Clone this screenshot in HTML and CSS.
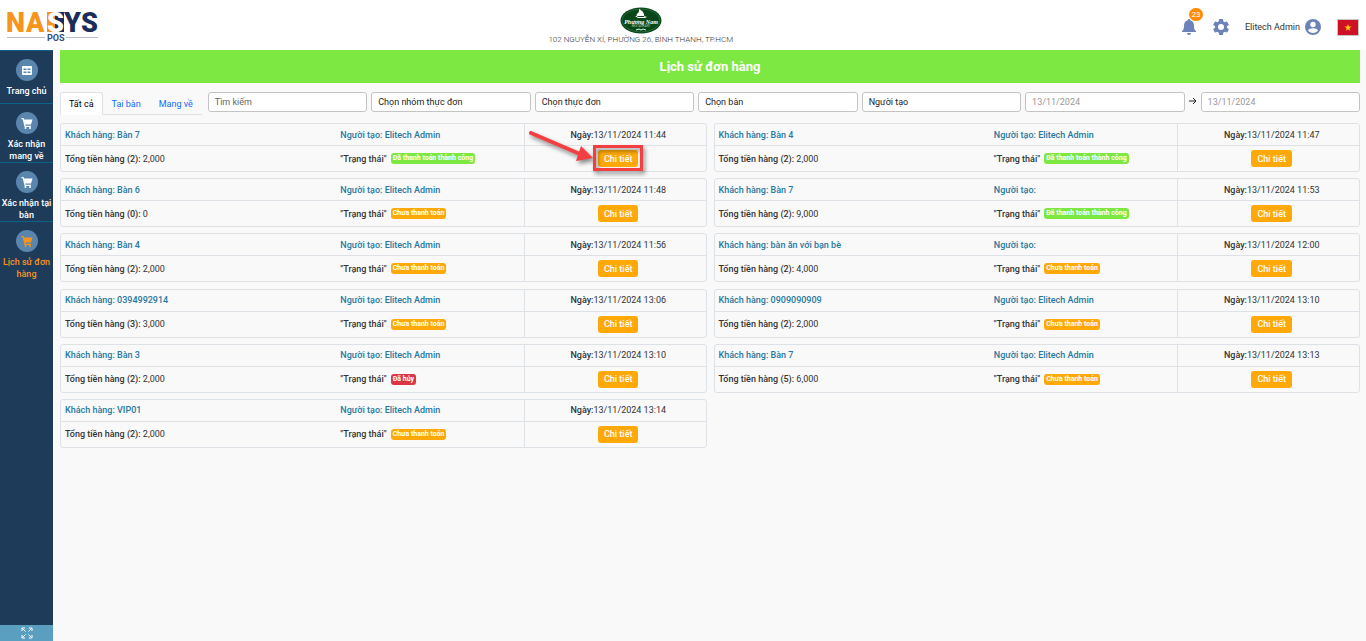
FILE: index.html
```html
<!DOCTYPE html>
<html lang="vi">
<head>
<meta charset="utf-8">
<title>Lịch sử đơn hàng</title>
<meta name="viewport" content="width=device-width, initial-scale=1">
<link rel="stylesheet" href="styles.css">
</head>
<body>
<svg class="defs" aria-hidden="true">
  <symbol id="cart" viewBox="0 0 24 24"><path d="M1 2h4l1 3h17l-3 10H8.500l.7 2.500H20V20H7.200L3.400 4.500H1z"/><circle cx="9" cy="22" r="2"/><circle cx="18" cy="22" r="2"/></symbol>
</svg>
<header class="header">
  <a class="brand" href="#" aria-label="NASYS POS">
    <svg width="96" height="44" viewBox="0 0 96 44">
      <rect x="41" y="9" width="8" height="20" fill="#f7941d"/>
      <rect x="49" y="9" width="9" height="20" fill="#1b2d5b"/>
      <g class="brand-letters">
        <text x="0" y="29" fill="#f7941d">N</text>
        <text x="20" y="29" fill="#f7941d">A</text>
        <text x="41" y="29" fill="#fff">S</text>
        <text x="58" y="29" fill="#1b2d5b">Y</text>
        <text x="75" y="29" fill="#1b2d5b">S</text>
      </g>
      <path d="M1 34.500H39M60 34.500H92" stroke="#b9bccb"/>
      <text class="brand-pos" x="41" y="38">POS</text>
    </svg>
  </a>
  <div class="store">
    <svg width="42" height="27" viewBox="0 0 42 27">
      <ellipse cx="21" cy="13.500" rx="20.500" ry="13" fill="#07471a"/>
      <ellipse cx="21" cy="13.500" rx="19" ry="11.500" fill="none" stroke="#3f7a4e" stroke-width=".6"/>
      <path d="M19 2c4 2 6 5 5 8h-6c-2-1-2-3 0-4 1-1 1-2 1-4zM15 9l3 2h7l2-1-3-1z" fill="#fff"/>
      <text class="store-name" x="21" y="17" text-anchor="middle">Phương Nam</text>
      <text class="store-sub" x="21" y="20" text-anchor="middle">RESTAURANT</text>
      <path d="M16 23l3-1 2 1 2-1 3 1" stroke="#dfe" fill="none"/>
    </svg>
    <span class="store-address">102 NGUYỄN XÍ, PHƯỜNG 26, BÌNH THẠNH, TP.HCM</span>
  </div>
  <div class="tools">
    <button class="icon-button bell" aria-label="Thông báo">
      <svg width="16" height="18" viewBox="0 0 16 18"><path d="M8 1c.8 0 1.200.5 1.200 1.300C12 3 13 5 13 8c0 3 .6 4 2 5v1H1v-1c1.400-1 2-2 2-5 0-3 1-5 3.800-5.700C6.800 1.500 7.200 1 8 1zM6 15h4c0 1.300-.8 2-2 2s-2-.7-2-2z"/></svg>
      <span class="count">23</span>
    </button>
    <button class="icon-button gear" aria-label="Cài đặt">
      <svg width="20" height="20" viewBox="0 0 24 24"><path d="M19.140 12.940c.04-.3.060-.61.060-.94s-.02-.64-.07-.94l2.030-1.580a.49.49 0 0 0 .12-.61l-1.920-3.320a.49.49 0 0 0-.59-.22l-2.390.96a7 7 0 0 0-1.620-.94l-.36-2.540a.48.48 0 0 0-.48-.41h-3.840a.48.48 0 0 0-.47.410l-.36 2.540a7.400 7.400 0 0 0-1.620.94l-2.390-.96a.48.48 0 0 0-.59.220L2.740 8.870a.48.48 0 0 0 .12.610l2.030 1.580a6 6 0 0 0 0 1.880l-2.030 1.580a.49.49 0 0 0-.12.610l1.920 3.320c.12.220.37.290.59.220l2.390-.96c.5.380 1.030.7 1.620.94l.36 2.540c.05.240.24.410.48.410h3.840c.24 0 .44-.17.47-.41l.36-2.540a7.400 7.400 0 0 0 1.620-.94l2.390.96c.22.080.47 0 .59-.22l1.920-3.320a.48.48 0 0 0-.12-.61zM12 15.600a3.600 3.600 0 1 1 0-7.200 3.600 3.600 0 0 1 0 7.200z"/></svg>
    </button>
    <button class="user"><span>Elitech Admin</span>
      <svg width="16" height="16" viewBox="0 0 16 16"><circle cx="8" cy="8" r="8"/><circle cx="8" cy="5.500" r="2.700" fill="#fff"/><path d="M3 11.500c1-3 9-3 10 0-2 3.300-8 3.300-10 0z" fill="#fff"/></svg>
    </button>
    <button class="flag" aria-label="Tiếng Việt">
      <svg width="22" height="17" viewBox="0 0 22 17"><rect x=".5" y=".5" width="21" height="16" fill="#cf1126" stroke="#c9c4c4"/><path d="M11 5l.9 2.600h2.700l-2.200 1.600.8 2.600L11 10.200l-2.200 1.600.8-2.600-2.200-1.600h2.700z" fill="#fc0"/></svg>
    </button>
  </div>
</header>
<div class="layout">
  <nav class="sidebar">
    <a class="nav-item" href="#"><span class="nav-icon"><svg width="10" height="9" viewBox="0 0 10 9"><path fill-rule="evenodd" d="M1 0h8q1 0 1 1v7q0 1-1 1H1q-1 0-1-1V1q0-1 1-1zM1.500 2.500v1.500h3V2.500zM5.500 2.500v1.500h3V2.500zM1.500 5.500V7h3V5.500zM5.500 5.500V7h3V5.500z"/></svg></span>Trang chủ</a>
    <a class="nav-item" href="#"><span class="nav-icon"><svg width="12" height="12"><use href="#cart"/></svg></span>Xác nhận mang về</a>
    <a class="nav-item" href="#"><span class="nav-icon"><svg width="12" height="12"><use href="#cart"/></svg></span>Xác nhận tại bàn</a>
    <a class="nav-item active" href="#"><span class="nav-icon"><svg width="12" height="12"><use href="#cart"/></svg></span>Lịch sử đơn hàng</a>
    <button class="expand" aria-label="Toàn màn hình"><svg width="12" height="12" viewBox="0 0 12 12"><path d="M1 4V1h3M1 1l3.500 3.500M8 1h3v3M11 1L7.500 4.500M1 8v3h3M1 11l3.500-3.500M11 8v3H8M11 11L7.500 7.500"/></svg></button>
  </nav>
  <main class="main">
    <h1 class="title">Lịch sử đơn hàng</h1>
    <form class="filters">
      <div class="tabs">
        <button type="button" class="tab selected">Tất cả</button>
        <button type="button" class="tab">Tại bàn</button>
        <button type="button" class="tab">Mang về</button>
      </div>
      <div class="fields">
        <input class="field" type="text" placeholder="Tìm kiếm" aria-label="Tìm kiếm">
        <select class="field" aria-label="Nhóm thực đơn"><option>Chọn nhóm thực đơn</option></select>
        <select class="field" aria-label="Thực đơn"><option>Chọn thực đơn</option></select>
        <select class="field" aria-label="Bàn"><option>Chọn bàn</option></select>
        <select class="field" aria-label="Người tạo"><option>Người tạo</option></select>
        <input class="field date" type="text" value="13/11/2024" aria-label="Từ ngày">
        <svg class="to" width="8" height="8" viewBox="0 0 8 8"><path d="M0 4h7M4 1l3 3-3 3"/></svg>
        <input class="field date" type="text" value="13/11/2024" aria-label="Đến ngày">
      </div>
    </form>
    <section class="orders">
      <article class="order">
        <div class="cell customer">Khách hàng: Bàn 7</div><div class="cell creator">Người tạo: Elitech Admin</div><div class="cell day"><b>Ngày:</b>13/11/2024 11:44</div>
        <div class="cell"><b>Tổng tiền hàng (2):</b>&nbsp;2,000</div><div class="cell"><b>"Trạng thái"</b><span class="badge paid">Đã thanh toán thành công</span></div>
        <div class="cell action"><span class="spot"><button class="detail">Chi tiết</button><svg class="pointer" width="120" height="56" viewBox="0 0 120 56"><path d="M7 6L56 27" stroke="#f33f41" stroke-width="4" stroke-linecap="round"/><path d="M57 19L69 31L52 34z" fill="#f33f41"/><rect x="70.500" y="19.500" width="47" height="23" fill="none" stroke="#f33f41" stroke-width="3"/></svg></span></div>
      </article>
      <article class="order">
        <div class="cell customer">Khách hàng: Bàn 4</div><div class="cell creator">Người tạo: Elitech Admin</div><div class="cell day"><b>Ngày:</b>13/11/2024 11:47</div>
        <div class="cell"><b>Tổng tiền hàng (2):</b>&nbsp;2,000</div><div class="cell"><b>"Trạng thái"</b><span class="badge paid">Đã thanh toán thành công</span></div>
        <div class="cell action"><button class="detail">Chi tiết</button></div>
      </article>
      <article class="order">
        <div class="cell customer">Khách hàng: Bàn 6</div><div class="cell creator">Người tạo: Elitech Admin</div><div class="cell day"><b>Ngày:</b>13/11/2024 11:48</div>
        <div class="cell"><b>Tổng tiền hàng (0):</b>&nbsp;0</div><div class="cell"><b>"Trạng thái"</b><span class="badge">Chưa thanh toán</span></div>
        <div class="cell action"><button class="detail">Chi tiết</button></div>
      </article>
      <article class="order">
        <div class="cell customer">Khách hàng: Bàn 7</div><div class="cell creator">Người tạo:</div><div class="cell day"><b>Ngày:</b>13/11/2024 11:53</div>
        <div class="cell"><b>Tổng tiền hàng (2):</b>&nbsp;9,000</div><div class="cell"><b>"Trạng thái"</b><span class="badge paid">Đã thanh toán thành công</span></div>
        <div class="cell action"><button class="detail">Chi tiết</button></div>
      </article>
      <article class="order">
        <div class="cell customer">Khách hàng: Bàn 4</div><div class="cell creator">Người tạo: Elitech Admin</div><div class="cell day"><b>Ngày:</b>13/11/2024 11:56</div>
        <div class="cell"><b>Tổng tiền hàng (2):</b>&nbsp;2,000</div><div class="cell"><b>"Trạng thái"</b><span class="badge">Chưa thanh toán</span></div>
        <div class="cell action"><button class="detail">Chi tiết</button></div>
      </article>
      <article class="order">
        <div class="cell customer">Khách hàng: bàn ăn với bạn bè</div><div class="cell creator">Người tạo:</div><div class="cell day"><b>Ngày:</b>13/11/2024 12:00</div>
        <div class="cell"><b>Tổng tiền hàng (2):</b>&nbsp;4,000</div><div class="cell"><b>"Trạng thái"</b><span class="badge">Chưa thanh toán</span></div>
        <div class="cell action"><button class="detail">Chi tiết</button></div>
      </article>
      <article class="order">
        <div class="cell customer">Khách hàng: 0394992914</div><div class="cell creator">Người tạo: Elitech Admin</div><div class="cell day"><b>Ngày:</b>13/11/2024 13:06</div>
        <div class="cell"><b>Tổng tiền hàng (3):</b>&nbsp;3,000</div><div class="cell"><b>"Trạng thái"</b><span class="badge">Chưa thanh toán</span></div>
        <div class="cell action"><button class="detail">Chi tiết</button></div>
      </article>
      <article class="order">
        <div class="cell customer">Khách hàng: 0909090909</div><div class="cell creator">Người tạo: Elitech Admin</div><div class="cell day"><b>Ngày:</b>13/11/2024 13:10</div>
        <div class="cell"><b>Tổng tiền hàng (2):</b>&nbsp;2,000</div><div class="cell"><b>"Trạng thái"</b><span class="badge">Chưa thanh toán</span></div>
        <div class="cell action"><button class="detail">Chi tiết</button></div>
      </article>
      <article class="order">
        <div class="cell customer">Khách hàng: Bàn 3</div><div class="cell creator">Người tạo: Elitech Admin</div><div class="cell day"><b>Ngày:</b>13/11/2024 13:10</div>
        <div class="cell"><b>Tổng tiền hàng (2):</b>&nbsp;2,000</div><div class="cell"><b>"Trạng thái"</b><span class="badge cancelled">Đã hủy</span></div>
        <div class="cell action"><button class="detail">Chi tiết</button></div>
      </article>
      <article class="order">
        <div class="cell customer">Khách hàng: Bàn 7</div><div class="cell creator">Người tạo: Elitech Admin</div><div class="cell day"><b>Ngày:</b>13/11/2024 13:13</div>
        <div class="cell"><b>Tổng tiền hàng (5):</b>&nbsp;6,000</div><div class="cell"><b>"Trạng thái"</b><span class="badge">Chưa thanh toán</span></div>
        <div class="cell action"><button class="detail">Chi tiết</button></div>
      </article>
      <article class="order">
        <div class="cell customer">Khách hàng: VIP01</div><div class="cell creator">Người tạo: Elitech Admin</div><div class="cell day"><b>Ngày:</b>13/11/2024 13:14</div>
        <div class="cell"><b>Tổng tiền hàng (2):</b>&nbsp;2,000</div><div class="cell"><b>"Trạng thái"</b><span class="badge">Chưa thanh toán</span></div>
        <div class="cell action"><button class="detail">Chi tiết</button></div>
      </article>
    </section>
  </main>
</div>
</body>
</html>
```
FILE: styles.css
```css
* { box-sizing: border-box; }
body {
  margin: 0;
  min-height: 100vh;
  display: flex;
  flex-direction: column;
  background: #f9f9f9;
  color: #333;
  font: 9px/12px Roboto, sans-serif;
}
button, input, select { font: inherit; color: inherit; margin: 0; }
button { border: 0; padding: 0; background: none; cursor: pointer; }
a { color: inherit; text-decoration: none; }
svg { display: block; flex: none; }
b { font-weight: 500; }
.defs { position: absolute; width: 0; height: 0; }

.header {
  display: grid;
  grid-template-columns: 13fr auto 15fr;
  height: 50px;
  padding: 0 7px 0 6px;
  background: #fff;
}
.brand { padding-top: 3px; }
.brand-letters { font: 900 27px Roboto, sans-serif; }
.brand-pos { font: 700 9px Roboto, sans-serif; fill: #2c4a8c; }
.store {
  display: flex;
  flex-direction: column;
  align-items: center;
  padding-top: 7px;
}
.store-name { font: italic 700 6px "Liberation Serif", serif; fill: #fff; }
.store-sub { font: 3px Roboto, sans-serif; fill: #b5cfba; }
.store-address { font-size: 8px; font-weight: 300; }
.tools {
  display: flex;
  justify-content: flex-end;
  align-items: center;
  padding-top: 4px;
  fill: #6c83b9;
}
.icon-button { position: relative; }
.bell { margin-right: 14px; }
.gear { margin-right: 14px; }
.count {
  position: absolute;
  top: -10px;
  left: 8px;
  width: 14px;
  height: 13px;
  border-radius: 7px;
  background: #ff8c00;
  color: #fff;
  font-size: 8px;
  line-height: 13px;
}
.user { display: flex; align-items: center; gap: 5px; margin-right: 16px; }

.layout { flex: 1; display: flex; }
.sidebar {
  width: 53px;
  flex: none;
  display: flex;
  flex-direction: column;
  background: #1e3c5a;
  color: #fff;
  fill: #fff;
  font-weight: 500;
  text-align: center;
}
.nav-item {
  display: flex;
  flex-direction: column;
  align-items: center;
  gap: 4px;
  padding-top: 8px;
  border-top: 1px solid #0d6285;
}
.nav-item:first-child { padding-bottom: 6px; }
.nav-icon {
  display: grid;
  place-items: center;
  width: 22px;
  height: 22px;
  border-radius: 50%;
  background: #5a86ae;
}
.active { color: #f7941d; fill: #f7941d; }
.expand {
  display: grid;
  place-items: center;
  height: 16px;
  margin-top: auto;
  background: #5a9fc0;
}
.expand path { fill: none; stroke: #fff; }

.main { flex: 1; min-width: 0; padding: 0 6px 0 7px; }
.title {
  margin: 0;
  background: #7ee842;
  color: #fff;
  text-align: center;
  font-size: 13px;
  font-weight: 700;
  line-height: 33px;
}
.filters { display: flex; gap: 6px; padding-top: 9px; }
.tabs { display: flex; height: 23px; border-bottom: 1px solid #dee2e6; }
.tab {
  height: 23px;
  padding: 0 8px;
  border: 1px solid transparent;
  color: #0d6efd;
}
.selected {
  border-color: #dee2e6 #dee2e6 #fff;
  border-radius: 3px 3px 0 0;
  background: #fff;
  color: #000;
}
.fields { flex: 1; display: flex; align-items: flex-start; gap: 4px; }
.field {
  flex: 1;
  min-width: 0;
  height: 20px;
  padding: 0 6px;
  border: 1px solid #c4c4c4;
  border-radius: 3px;
  background: #fff;
  color: #222;
  appearance: none;
}
.field::placeholder { color: #666; opacity: 1; }
.date { color: #999; }
.to { margin-top: 5px; fill: none; stroke: #222; }

.orders {
  display: grid;
  grid-template-columns: 1fr 1fr;
  gap: 6px 7px;
  min-height: 325px;
  margin-top: 8px;
  align-content: space-between;
}
.order {
  display: grid;
  grid-template-columns: 280fr 184fr 182fr;
  grid-template-rows: 22px 25px;
  border: 1px solid #dee2e6;
  border-radius: 3px;
}
.cell { display: flex; align-items: center; white-space: nowrap; }
.cell:nth-child(-n+3) { border-bottom: 1px solid #dee2e6; }
.cell:nth-child(3n+1) { padding-left: 4px; }
.cell:nth-child(3n) { justify-content: center; padding-left: 6px; border-left: 1px solid #dee2e6; }
.customer, .creator { color: #2778a0; font-weight: 500; }
.badge {
  margin-left: 4px;
  padding: 0 2px;
  border-radius: 3px;
  background: #ffa908;
  color: #fff;
  font-size: 7px;
  font-weight: 700;
  line-height: 11px;
}
.paid { background: #7ee842; }
.cancelled { background: #dc3545; }
.detail {
  height: 17px;
  padding: 0 6px;
  border-radius: 3px;
  background: #ffa908;
  color: #fff;
  font-weight: 500;
}
.spot { position: relative; display: flex; }
.pointer {
  position: absolute;
  top: -23px;
  right: -6px;
  pointer-events: none;
  filter: drop-shadow(2px 3px 2px rgb(0 0 0 / 45%));
}
```
